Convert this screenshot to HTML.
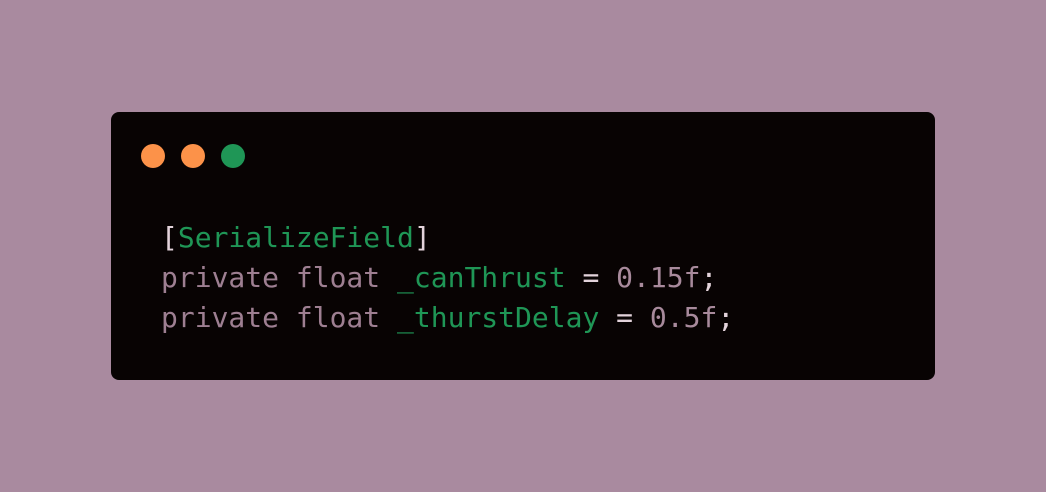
<!DOCTYPE html>
<html><head><meta charset="utf-8"><style>
html,body{margin:0;padding:0;width:1046px;height:492px;background:#a98a9f;overflow:hidden}
.card{position:absolute;left:111px;top:112px;width:824px;height:268px;background:#080303;border-radius:8px}
.dot{position:absolute;top:144px;width:24px;height:24px;border-radius:50%}
pre{position:absolute;left:161px;top:218px;margin:0;font-family:"DejaVu Sans Mono","Liberation Mono",monospace;font-size:28px;line-height:40px;color:#9e7f92}
.g{color:#1f9656}.w{color:#e3d3db}.n{color:#a88a9c}
</style></head><body>
<div class="card"></div>
<div class="dot" style="left:141px;background:#fc9249"></div>
<div class="dot" style="left:181px;background:#fc9249"></div>
<div class="dot" style="left:221px;background:#1f9656"></div>
<pre><span class="w">[</span><span class="g">SerializeField</span><span class="w">]</span>
private float <span class="g">_canThrust</span> <span class="w">=</span> <span class="n">0.15f</span><span class="w">;</span>
private float <span class="g">_thurstDelay</span> <span class="w">=</span> <span class="n">0.5f</span><span class="w">;</span></pre>
</body></html>
